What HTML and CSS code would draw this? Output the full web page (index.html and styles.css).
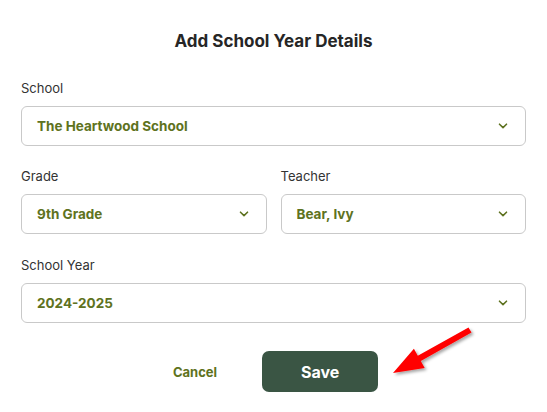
FILE: index.html
```html
<!DOCTYPE html>
<html lang="en">
<head>
<meta charset="utf-8">
<title>Add School Year Details</title>
<link rel="stylesheet" href="styles.css">
</head>
<body>
<div class="dialog">
  <h1 class="title">Add School Year Details</h1>

  <div class="field">
    <div class="label">School</div>
    <div class="select">
      <span class="value">The Heartwood School</span>
      <svg class="chev" width="10" height="6" viewBox="0 0 10 6"><path d="M1.5 1.2 L5 4.6 L8.5 1.2" fill="none" stroke="#5e7220" stroke-width="1.6" stroke-linecap="round" stroke-linejoin="round"/></svg>
    </div>
  </div>

  <div class="row">
    <div class="field">
      <div class="label">Grade</div>
      <div class="select">
        <span class="value">9th Grade</span>
        <svg class="chev" width="10" height="6" viewBox="0 0 10 6"><path d="M1.5 1.2 L5 4.6 L8.5 1.2" fill="none" stroke="#5e7220" stroke-width="1.6" stroke-linecap="round" stroke-linejoin="round"/></svg>
      </div>
    </div>
    <div class="field">
      <div class="label">Teacher</div>
      <div class="select">
        <span class="value">Bear, Ivy</span>
        <svg class="chev" width="10" height="6" viewBox="0 0 10 6"><path d="M1.5 1.2 L5 4.6 L8.5 1.2" fill="none" stroke="#5e7220" stroke-width="1.6" stroke-linecap="round" stroke-linejoin="round"/></svg>
      </div>
    </div>
  </div>

  <div class="field">
    <div class="label">School Year</div>
    <div class="select">
      <span class="value">2024-2025</span>
      <svg class="chev" width="10" height="6" viewBox="0 0 10 6"><path d="M1.5 1.2 L5 4.6 L8.5 1.2" fill="none" stroke="#5e7220" stroke-width="1.6" stroke-linecap="round" stroke-linejoin="round"/></svg>
    </div>
  </div>

  <div class="actions">
    <button class="btn-cancel">Cancel</button>
    <button class="btn-save">Save</button>
  </div>
</div>

<svg class="arrow" width="547" height="412" viewBox="0 0 547 412">
  <defs>
    <filter id="sh" x="-20%" y="-20%" width="140%" height="140%">
      <feDropShadow dx="2" dy="2" stdDeviation="1.5" flood-color="#000" flood-opacity="0.35"/>
    </filter>
  </defs>
  <polygon filter="url(#sh)" fill="#ff0000" points="393,373 413.9,348.7 417.8,355.7 468.5,327.4 471.5,332.6 420.8,360.9 424.7,367.9"/>
</svg>
</body>
</html>
```

FILE: styles.css
```css
html, body {
  margin: 0;
  padding: 0;
  background: #ffffff;
}

body {
  font-family: Inter, "Noto Sans", "Liberation Sans", sans-serif;
  position: relative;
  width: 547px;
  height: 412px;
  overflow: hidden;
}

.dialog {
  padding: 31px 21px 0 21px;
  display: flex;
  flex-direction: column;
}

.title {
  margin: 0 0 28px 0;
  font-size: 17px;
  line-height: 20px;
  font-weight: 700;
  color: #262626;
  text-align: center;
}

.field {
  display: flex;
  flex-direction: column;
  margin-bottom: 21px;
}

.row {
  display: grid;
  grid-template-columns: 1fr 1fr;
  column-gap: 14px;
}

.row .field {
  margin-bottom: 22px;
}

.label {
  font-size: 13px;
  line-height: 18px;
  color: #333333;
  margin-bottom: 9px;
}

.select {
  box-sizing: border-box;
  height: 40px;
  border: 1px solid #c9c9c9;
  border-radius: 6px;
  display: flex;
  align-items: center;
  justify-content: space-between;
  padding: 0 17px 0 15px;
}

.value {
  font-size: 13.5px;
  font-weight: 700;
  color: #5e7220;
}

.chev {
  display: block;
}

.actions {
  display: flex;
  justify-content: center;
  align-items: center;
  gap: 45px;
  margin-top: 7px;
  padding-left: 4px;
}

.btn-cancel {
  background: none;
  border: none;
  padding: 0;
  font-family: inherit;
  font-size: 13px;
  font-weight: 700;
  color: #5e7220;
}

.btn-save {
  box-sizing: border-box;
  width: 116px;
  height: 41px;
  border: none;
  border-radius: 7px;
  background: #3a5544;
  color: #ffffff;
  font-family: inherit;
  font-size: 16px;
  font-weight: 700;
}

.arrow {
  position: absolute;
  left: 0;
  top: 0;
  pointer-events: none;
}
```
